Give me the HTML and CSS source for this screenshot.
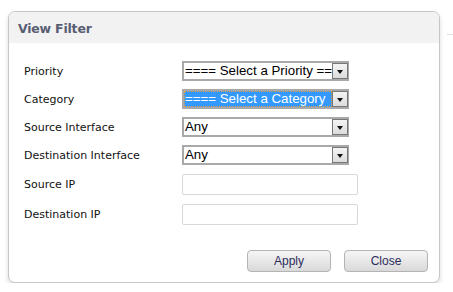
FILE: index.html
```html
<!DOCTYPE html>
<html lang="en">
<head>
    <meta charset="UTF-8">
    <title>View Filter</title>
    <link rel="stylesheet" href="styles.css">
</head>
<body>
<div class="dialog">
    <div class="dialog-header">View Filter</div>
    <form class="dialog-body">
        <div class="row">
            <label>Priority</label>
            <div class="select">
                <span class="select-text">==== Select a Priority ==</span>
                <span class="select-arrow"></span>
            </div>
        </div>
        <div class="row">
            <label>Category</label>
            <div class="select">
                <span class="select-text selected">==== Select a Category</span>
                <span class="select-arrow"></span>
            </div>
        </div>
        <div class="row">
            <label>Source Interface</label>
            <div class="select">
                <span class="select-text">Any</span>
                <span class="select-arrow"></span>
            </div>
        </div>
        <div class="row">
            <label>Destination Interface</label>
            <div class="select">
                <span class="select-text">Any</span>
                <span class="select-arrow"></span>
            </div>
        </div>
        <div class="row row-ip">
            <label>Source IP</label>
            <input type="text" class="text-input">
        </div>
        <div class="row row-ip">
            <label>Destination IP</label>
            <input type="text" class="text-input">
        </div>
        <div class="buttons">
            <button type="button" class="btn">Apply</button>
            <button type="button" class="btn">Close</button>
        </div>
    </form>
</div>
<div class="edge-line"></div>
</body>
</html>
```

FILE: styles.css
```css
body {
    margin: 0;
    background-color: #ffffff;
    font-family: "Liberation Sans", Arial, sans-serif;
}

/* dialog box */
.dialog {
    margin: 11px 0 0 8px;
    width: 430px;
    height: 270px;
    border: 1px solid #c6c6c6;
    border-radius: 7px;
    background-color: #ffffff;
    box-shadow: 0 3px 5px rgba(0, 0, 0, 0.14);
    overflow: hidden;
    display: flex;
    flex-direction: column;
}

.dialog-header {
    height: 31px;
    line-height: 33px;
    padding-left: 9px;
    background-color: #f2f2f2;
    color: #585d72;
    font-family: "DejaVu Sans", sans-serif;
    font-weight: bold;
    font-size: 12.5px;
    letter-spacing: -0.2px;
}

.dialog-body {
    flex: 1;
    display: flex;
    flex-direction: column;
    padding: 19px 11px 0 15px;
}

.row {
    display: flex;
    align-items: center;
    height: 28px;
    align-self: stretch;
}

.row > label {
    width: 158px;
    font-family: "DejaVu Sans", sans-serif;
    font-size: 11px;
    color: #111111;
    margin-top: -10px;
}

.row-ip {
    height: 30px;
}

.row-ip > label {
    margin-top: -9px;
}

/* select boxes */
.select {
    width: 164px;
    height: 16px;
    border: 2px solid #a9a9a9;
    border-right-width: 1px;
    display: flex;
    align-items: stretch;
    background-color: #ffffff;
    margin-top: -10px;
}

.select-text {
    flex: 1;
    overflow: hidden;
    white-space: nowrap;
    font-size: 13.3px;
    line-height: 16px;
    padding-left: 1px;
    color: #000000;
}

.select-text.selected {
    background-color: #3399ff;
    color: #ffffff;
    outline: 1px dotted #e8a040;
    outline-offset: -1px;
}

.select-arrow {
    width: 14px;
    border: 1px solid #777777;
    background: linear-gradient(#f4f4f4, #dcdcdc);
    position: relative;
}

.select-arrow::after {
    content: "";
    position: absolute;
    left: 4px;
    top: 6px;
    border-left: 3px solid transparent;
    border-right: 3px solid transparent;
    border-top: 4px solid #111111;
}

/* text inputs */
.text-input {
    width: 176px;
    height: 21px;
    box-sizing: border-box;
    border: 1px solid #d8d8d8;
    border-radius: 2px;
    margin: -9px 0 0 0;
    padding: 0;
}

/* buttons */
.buttons {
    display: flex;
    justify-content: flex-end;
    gap: 13px;
    margin-top: auto;
    margin-bottom: 10px;
}

.btn {
    width: 84px;
    height: 22px;
    border: 1px solid #b4b4b4;
    border-radius: 4px;
    background: linear-gradient(#f6f6f6, #d9d9d9);
    color: #2c2c5c;
    font-family: "Liberation Sans", Arial, sans-serif;
    font-size: 12px;
    padding: 0;
}

.edge-line {
    position: absolute;
    left: 447px;
    top: 34px;
    width: 6px;
    height: 1px;
    background-color: #e0e0e0;
}
```
